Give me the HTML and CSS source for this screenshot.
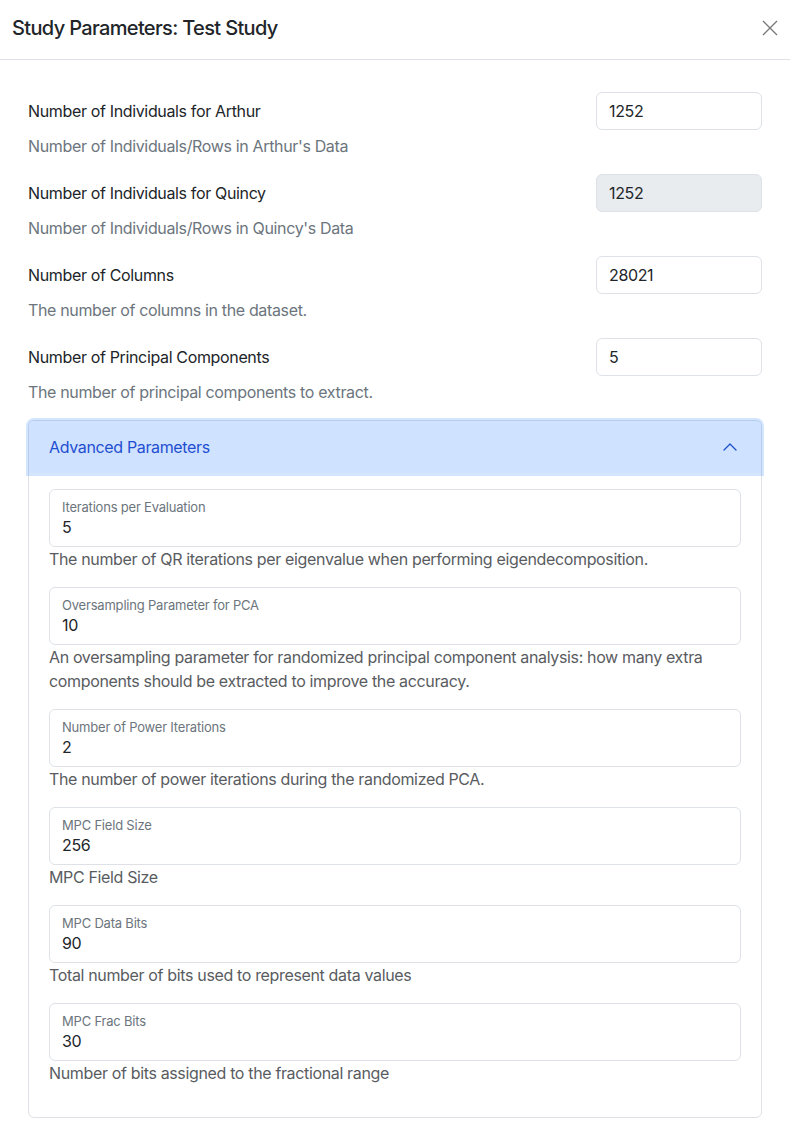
FILE: index.html
```html
<!DOCTYPE html>
<html lang="en">
<head>
<meta charset="utf-8">
<title>Study Parameters</title>
<link rel="stylesheet" href="styles.css">
</head>
<body>
<div class="modal">
  <div class="modal-header">
    <h5 class="modal-title">Study Parameters: Test Study</h5>
    <button class="btn-close" type="button" aria-label="Close">
      <svg width="16" height="16" viewBox="0 0 16 16"><path d="M1 1L15 15M15 1L1 15" stroke="#7a7a7a" stroke-width="1.4" fill="none"/></svg>
    </button>
  </div>
  <div class="modal-body">
    <div class="param">
      <label class="param-label">Number of Individuals for Arthur</label>
      <input class="form-control" type="text" value="1252">
      <div class="help">Number of Individuals/Rows in Arthur's Data</div>
    </div>
    <div class="param">
      <label class="param-label">Number of Individuals for Quincy</label>
      <input class="form-control" type="text" value="1252" disabled>
      <div class="help">Number of Individuals/Rows in Quincy's Data</div>
    </div>
    <div class="param">
      <label class="param-label">Number of Columns</label>
      <input class="form-control" type="text" value="28021">
      <div class="help">The number of columns in the dataset.</div>
    </div>
    <div class="param">
      <label class="param-label">Number of Principal Components</label>
      <input class="form-control" type="text" value="5">
      <div class="help">The number of principal components to extract.</div>
    </div>

    <div class="accordion">
      <button class="accordion-button" type="button">
        <span>Advanced Parameters</span>
        <svg class="chevron" width="16" height="16" viewBox="0 0 16 16"><path d="M2 11L8 5L14 11" stroke="#1f4fd1" stroke-width="1.3" fill="none" stroke-linecap="round" stroke-linejoin="round"/></svg>
      </button>
      <div class="accordion-body">
        <div class="field">
          <div class="floating">
            <label class="float-label">Iterations per Evaluation</label>
            <input class="float-input" type="text" value="5">
          </div>
          <div class="field-help">The number of QR iterations per eigenvalue when performing eigendecomposition.</div>
        </div>
        <div class="field">
          <div class="floating">
            <label class="float-label">Oversampling Parameter for PCA</label>
            <input class="float-input" type="text" value="10">
          </div>
          <div class="field-help">An oversampling parameter for randomized principal component analysis: how many extra components should be extracted to improve the accuracy.</div>
        </div>
        <div class="field">
          <div class="floating">
            <label class="float-label">Number of Power Iterations</label>
            <input class="float-input" type="text" value="2">
          </div>
          <div class="field-help">The number of power iterations during the randomized PCA.</div>
        </div>
        <div class="field">
          <div class="floating">
            <label class="float-label">MPC Field Size</label>
            <input class="float-input" type="text" value="256">
          </div>
          <div class="field-help">MPC Field Size</div>
        </div>
        <div class="field">
          <div class="floating">
            <label class="float-label">MPC Data Bits</label>
            <input class="float-input" type="text" value="90">
          </div>
          <div class="field-help">Total number of bits used to represent data values</div>
        </div>
        <div class="field">
          <div class="floating">
            <label class="float-label">MPC Frac Bits</label>
            <input class="float-input" type="text" value="30">
          </div>
          <div class="field-help">Number of bits assigned to the fractional range</div>
        </div>
      </div>
    </div>
  </div>
</div>
</body>
</html>
```
FILE: styles.css
```css
* { box-sizing: border-box; }
html, body {
  margin: 0;
  padding: 0;
  background: #ffffff;
}
body {
  font-family: Inter, "Liberation Sans", Arial, sans-serif;
  font-size: 16px;
  line-height: 24px;
  color: #212529;
  letter-spacing: -0.35px;
}
.modal {
  width: 790px;
}
.modal-header {
  height: 60px;
  display: flex;
  align-items: center;
  justify-content: space-between;
  padding: 0 12px 3px 12px;
  border-bottom: 1px solid #dee2e6;
}
.modal-title {
  margin: 0;
  font-size: 20px;
  font-weight: 500;
  line-height: 24px;
  color: #212529;
  letter-spacing: -0.65px;
}
.btn-close {
  border: 0;
  background: transparent;
  padding: 0;
  width: 16px;
  height: 16px;
  margin-right: 0;
  display: flex;
}
.modal-body {
  padding: 32px 28px 12px 28px;
}
.param {
  display: grid;
  grid-template-columns: 1fr 166px;
  column-gap: 24px;
  margin-bottom: 16px;
}
.param-label {
  align-self: center;
}
.form-control {
  font: inherit;
  letter-spacing: -0.35px;
  color: #212529;
  height: 38px;
  padding: 6px 12px;
  border: 1px solid #dee2e6;
  border-radius: 6px;
  background: #fff;
  width: 166px;
}
.form-control:disabled {
  background: #e9ecef;
}
.help {
  grid-column: 1 / -1;
  margin-top: 4px;
  color: #6c757d;
}
.accordion {
  border: 1px solid #dee2e6;
  border-radius: 6px;
  margin-top: 0;
}
.accordion-button {
  display: flex;
  width: 100%;
  align-items: center;
  justify-content: space-between;
  font: inherit;
  letter-spacing: -0.35px;
  color: #1f4fd1;
  background: #cfe2ff;
  border: 0;
  border-radius: 5px 5px 0 0;
  padding: 13px 23px 13px 20px;
  height: 52px;
  text-align: left;
  box-shadow: 0 0 0 3px rgba(13, 110, 253, 0.18);
  position: relative;
}
.chevron {
  flex: none;
}
.accordion-body {
  padding: 16px 20px 16px 20px;
}
.field {
  margin-bottom: 16px;
}
.floating {
  border: 1px solid #dee2e6;
  border-radius: 6px;
  height: 58px;
  padding: 10px 12px 0 12px;
  display: flex;
  flex-direction: column;
}
.float-label {
  font-size: 13px;
  line-height: 15px;
  color: #6c757d;
  letter-spacing: -0.2px;
}
.float-input {
  font: inherit;
  letter-spacing: -0.35px;
  color: #212529;
  border: 0;
  padding: 0;
  height: 24px;
  background: transparent;
  outline: none;
}
.field-help {
  color: #595c5f;
}
```
